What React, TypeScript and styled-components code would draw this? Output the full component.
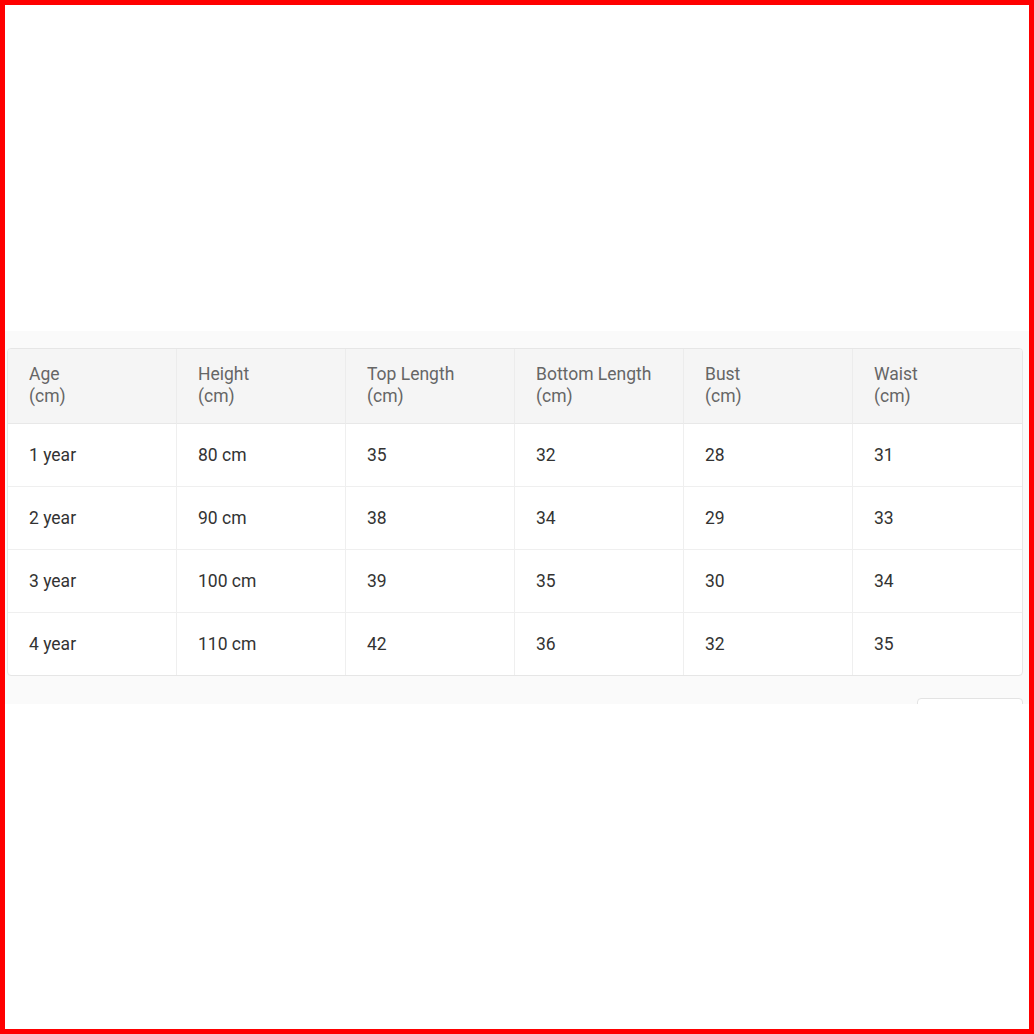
import styled, { createGlobalStyle } from "styled-components";

const GlobalStyle = createGlobalStyle`
  html, body {
    margin: 0;
    padding: 0;
    background: #ffffff;
  }
  * {
    box-sizing: border-box;
  }
`;

const columns = ["Age", "Height", "Top Length", "Bottom Length", "Bust", "Waist"];

const rows = [
  ["1 year", "80 cm", "35", "32", "28", "31"],
  ["2 year", "90 cm", "38", "34", "29", "33"],
  ["3 year", "100 cm", "39", "35", "30", "34"],
  ["4 year", "110 cm", "42", "36", "32", "35"],
];

const App = () => {
  return (
    <>
      <GlobalStyle />
      <Frame>
        <Strip>
          <Table>
            <colgroup>
              {columns.map((c) => (
                <col key={c} />
              ))}
            </colgroup>
            <thead>
              <tr>
                {columns.map((c) => (
                  <Th key={c}>
                    {c}
                    <br />
                    (cm)
                  </Th>
                ))}
              </tr>
            </thead>
            <tbody>
              {rows.map((r, i) => (
                <tr key={i}>
                  {r.map((v, j) => (
                    <Td key={j} $last={i === rows.length - 1}>
                      {v}
                    </Td>
                  ))}
                </tr>
              ))}
            </tbody>
          </Table>
          <Footer>
            <PagerBox />
          </Footer>
        </Strip>
      </Frame>
    </>
  );
};

export default App;

const Frame = styled.div`
  width: 1034px;
  height: 1034px;
  border: 5px solid #ff0000;
  background: #ffffff;
  display: flex;
  flex-direction: column;
  justify-content: center;
`;

const Strip = styled.div`
  height: 373px;
  background: #fafafa;
  padding: 17px 6px 0 2px;
  overflow: hidden;
  display: flex;
  flex-direction: column;
  gap: 22px;
`;

const Table = styled.table`
  width: 1016px;
  table-layout: fixed;
  border-collapse: separate;
  border-spacing: 0;
  border: 1px solid #e6e6e6;
  border-radius: 4px;
  background: #ffffff;
  overflow: hidden;
  font-family: Roboto, "Liberation Sans", sans-serif;
  font-size: 17.5px;
  line-height: 22px;
`;

const Th = styled.th`
  text-align: left;
  font-weight: 400;
  color: #666666;
  background: #f5f5f5;
  padding: 14px 21px 16px;
  border-bottom: 1px solid #e8e8e8;
  border-right: 1px solid #ececec;
  &:last-child {
    border-right: none;
  }
`;

const Td = styled.td<{ $last?: boolean }>`
  color: #333333;
  padding: 20px 21px;
  border-bottom: ${(p) => (p.$last ? "none" : "1px solid #efefef")};
  border-right: 1px solid #efefef;
  &:last-child {
    border-right: none;
  }
`;

const Footer = styled.div`
  display: flex;
  justify-content: flex-end;
`;

const PagerBox = styled.div`
  width: 106px;
  height: 32px;
  background: #ffffff;
  border: 1px solid #e3e3e3;
  border-radius: 4px;
`;
